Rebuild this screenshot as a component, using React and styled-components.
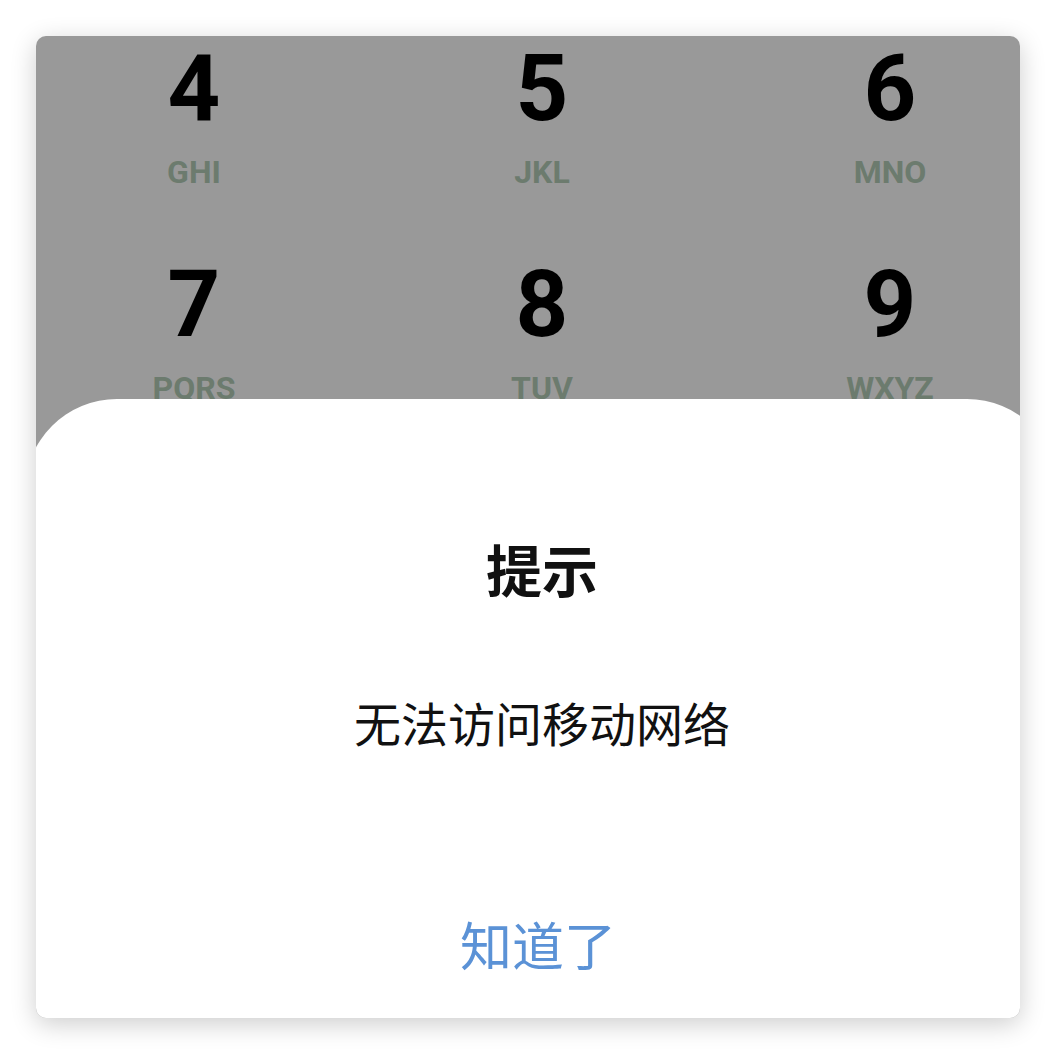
import React from "react";
import styled, { createGlobalStyle } from "styled-components";

const keys = [
  { digit: "4", letters: "GHI" },
  { digit: "5", letters: "JKL" },
  { digit: "6", letters: "MNO" },
  { digit: "7", letters: "PQRS" },
  { digit: "8", letters: "TUV" },
  { digit: "9", letters: "WXYZ" },
];

const App = () => {
  return (
    <>
      <GlobalStyle />
      <Page>
        <Card>
          <Screen>
            <Keypad>
              {keys.map((k) => (
                <Key key={k.digit}>
                  <Digit>{k.digit}</Digit>
                  <Letters>{k.letters}</Letters>
                </Key>
              ))}
            </Keypad>
            <Sheet>
              <Title>提示</Title>
              <Message>无法访问移动网络</Message>
              <ConfirmButton>知道了</ConfirmButton>
            </Sheet>
          </Screen>
        </Card>
      </Page>
    </>
  );
};
export default App;

const GlobalStyle = createGlobalStyle`
  html, body {
    margin: 0;
    padding: 0;
    background: #fff;
  }
  * {
    box-sizing: border-box;
  }
`;

const Page = styled.div`
  width: 1056px;
  height: 1054px;
  padding: 36px;
`;

const Card = styled.div`
  width: 984px;
  height: 982px;
  border-radius: 10px;
  overflow: hidden;
  box-shadow: 0 6px 26px rgba(0, 0, 0, 0.2);
  background: #999999;
`;

const Screen = styled.div`
  position: relative;
  width: 1034px;
  height: 100%;
  margin-left: -11px;
`;

const Keypad = styled.div`
  display: grid;
  grid-template-columns: repeat(3, 348px);
  justify-content: center;
  row-gap: 71px;
  padding-top: 7px;
`;

const Key = styled.div`
  display: flex;
  flex-direction: column;
  align-items: center;
`;

const Digit = styled.div`
  font-family: Roboto, "Liberation Sans", sans-serif;
  font-weight: 700;
  font-size: 92px;
  line-height: 92px;
  color: #000;
`;

const Letters = styled.div`
  margin-top: 21px;
  font-family: Roboto, "Liberation Sans", sans-serif;
  font-weight: 700;
  font-size: 32px;
  line-height: 32px;
  color: #6c7b6e;
`;

const Sheet = styled.div`
  position: absolute;
  left: 0;
  right: 0;
  top: 363px;
  bottom: 0;
  background: #fff;
  border-radius: 92px 92px 0 0;
  display: flex;
  flex-direction: column;
  align-items: center;
  padding: 141px 0 48px;
  font-family: "Noto Sans CJK SC", "Noto Sans", sans-serif;
`;

const Title = styled.div`
  font-size: 56px;
  line-height: 56px;
  font-weight: 700;
  color: #111;
`;

const Message = styled.div`
  margin-top: 102px;
  font-size: 47px;
  line-height: 48px;
  font-weight: 400;
  color: #111;
`;

const ConfirmButton = styled.div`
  margin-top: auto;
  margin-right: 8px;
  font-size: 52px;
  line-height: 52px;
  font-weight: 400;
  color: #5b92d6;
  cursor: pointer;
`;
